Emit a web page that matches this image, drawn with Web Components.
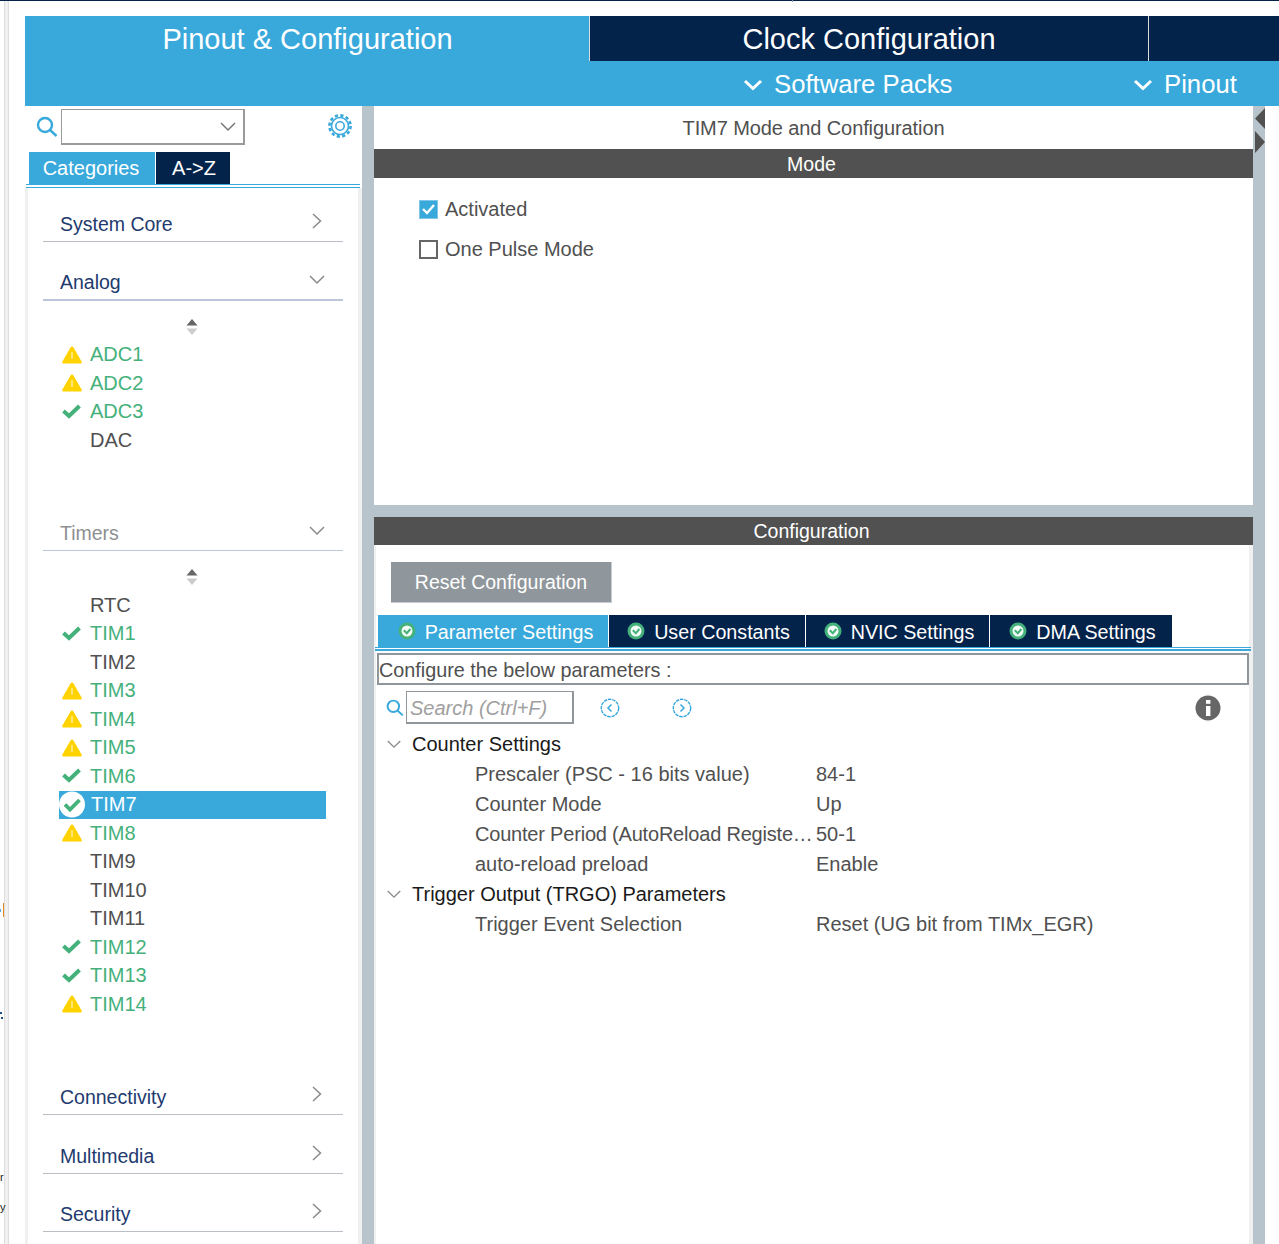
<!DOCTYPE html>
<html lang="en">
<head>
<meta charset="utf-8">
<title>TIM7 Mode and Configuration</title>
<style>
  html, body { margin: 0; height: 1244px; overflow: hidden; background: #fff; }
  body { font-family: "Liberation Sans", Arial, sans-serif; }
</style>
</head>
<body>
<cube-app></cube-app>
<script>
const ICONS = {
  ok: '<svg width="20" height="16" viewBox="0 0 20 16"><path d="M1.500 7l5.500 5L17.500 2" fill="none" stroke="#45b17a" stroke-width="4"/></svg>',
  warn: '<svg width="20" height="18" viewBox="0 0 20 18"><path d="M10 0.5c.7 0 1.200.4 1.500 1L19.600 15.600c.6 1.100 0 1.900-1.100 1.900H1.500c-1.100 0-1.700-.8-1.100-1.900L8.500 1.500c.3-.6.8-1 1.500-1z" fill="#ffd200"/><path d="M10 6v7" stroke="#fff3b0" stroke-width="1.300"/></svg>',
  selected: '<svg width="26" height="27" viewBox="0 0 26 27"><circle cx="13" cy="13.500" r="13" fill="#fff"/><path d="M6 13.500l5 5 9.500-9.500" fill="none" stroke="#45b17a" stroke-width="3.800"/></svg>',
  tabOk: '<svg width="18" height="18" viewBox="0 0 18 18"><circle cx="9" cy="9" r="8.500" fill="#45b17a"/><circle cx="9" cy="9" r="5.500" fill="#f2fbf6"/><path d="M5.800 8.200l3 3 3.600-4.200" fill="none" stroke="#45b17a" stroke-width="2"/></svg>',
  right: '<svg width="12" height="18" viewBox="0 0 12 18"><path d="M2 2l7.500 7L2 16" fill="none" stroke="#8a8a8a" stroke-width="1.500"/></svg>',
  down: '<svg width="18" height="12" viewBox="0 0 18 12"><path d="M2 2l7 7 7-7" fill="none" stroke="#8a8a8a" stroke-width="1.500"/></svg>',
  search: '<svg width="22" height="22" viewBox="0 0 22 22"><circle cx="9" cy="9" r="7" fill="none" stroke="#39a9dc" stroke-width="2.400"/><path d="M14 14l6.500 6" stroke="#39a9dc" stroke-width="2.400"/></svg>',
  gear: '<svg width="24" height="26" viewBox="0 0 24 26"><circle cx="12" cy="13" r="4.200" fill="none" stroke="#39a9dc" stroke-width="1.600"/><circle cx="12" cy="13" r="8.500" fill="none" stroke="#39a9dc" stroke-width="1.600"/><circle cx="12" cy="13" r="10.600" fill="none" stroke="#39a9dc" stroke-width="2.600" stroke-dasharray="3.200 2.350"/></svg>',
  prev: '<svg width="20" height="20" viewBox="0 0 20 20"><circle cx="10" cy="10" r="8.700" fill="none" stroke="#39a9dc" stroke-width="1.400" stroke-dasharray="3.500 .8"/><path d="M11.500 6.500L8 10l3.500 3.500" fill="none" stroke="#39a9dc" stroke-width="1.500"/></svg>',
  next: '<svg width="20" height="20" viewBox="0 0 20 20"><circle cx="10" cy="10" r="8.700" fill="none" stroke="#39a9dc" stroke-width="1.400" stroke-dasharray="3.500 .8"/><path d="M8.500 6.500L12 10l-3.500 3.500" fill="none" stroke="#39a9dc" stroke-width="1.500"/></svg>',
  info: '<svg width="26" height="26" viewBox="0 0 26 26"><circle cx="13" cy="13" r="12.500" fill="#666"/><rect x="11" y="11" width="4.400" height="10" fill="#fff"/><rect x="11" y="5" width="4.400" height="3.800" fill="#fff"/></svg>',
  sort: '<svg width="12" height="16" viewBox="0 0 12 16"><path d="M6 0l5.500 6.500H.5z" fill="#666"/><path d="M6 16L.5 9.500h11z" fill="#ccc"/></svg>',
  packDown: '<svg width="20" height="12" viewBox="0 0 20 12"><path d="M2 2l8 7.500L18 2" fill="none" stroke="#fff" stroke-width="3"/></svg>'
}

/**
 * Creates a component from its markup, with an open shadow root.
 *
 * @param {string} name - The element name.
 * @param {string} html - Styles and markup for the shadow root.
 * @param {Function} [render] - Called with the element when connected.
 */
function component (name, html, render) {
  const template = document.createElement('template')
  template.innerHTML = html
  customElements.define(name, class extends HTMLElement {
    constructor () {
      super()
      this.attachShadow({ mode: 'open' })
        .appendChild(template.content.cloneNode(true))
    }

    connectedCallback () {
      if (render) render(this, this.shadowRoot)
    }
  })
}

component('cube-header', `
  <style>
    :host { display: grid; grid-template-columns: 564px 560px 1fr; grid-template-rows: 45px 45px; background: #39a9dc; color: #fff; font-size: 29px; }
    .tab { display: flex; align-items: center; justify-content: center; box-sizing: border-box; padding-top: 2px; }
    .one { padding-left: 1px; }
    .two { background: #03234b; border-left: 1px solid #d8dde2; border-right: 1px solid #d8dde2; }
    .three { background: #03234b; }
    .menu { grid-column: 1 / 4; display: grid; grid-template-columns: 719px 390px 1fr; font-size: 25.700px; }
    .item { grid-column: 2; display: flex; align-items: center; gap: 11px; margin-left: -1px; padding-top: 2px; }
    .item + .item { grid-column: 3; }
    svg { flex: none; }
  </style>
  <div class="tab one">Pinout &amp; Configuration</div>
  <div class="tab two">Clock Configuration</div>
  <div class="tab three"></div>
  <div class="menu">
    <div class="item">${ICONS.packDown}<span>Software Packs</span></div>
    <div class="item">${ICONS.packDown}<span>Pinout</span></div>
  </div>
`)

component('side-search', `
  <style>
    :host { display: flex; align-items: flex-start; height: 46px; padding: 3px 0 0 11px; box-sizing: border-box; }
    .combo { box-sizing: border-box; width: 184px; height: 36px; margin-left: 3px; border: 2px solid #9a9a9a; border-top-width: 1px; border-left-width: 1px; display: flex; align-items: center; justify-content: flex-end; padding-right: 6px; }
    .gear { margin: 4px 0 0 83px; display: flex; }
    .lens { display: flex; margin-top: 7px; }
  </style>
  <span class="lens">${ICONS.search}</span>
  <div class="combo">${ICONS.down.replace('#8a8a8a', '#777')}</div>
  <span class="gear">${ICONS.gear}</span>
`)

component('side-tabs', `
  <style>
    :host { display: block; height: 36px; box-sizing: border-box; }
    .tabs { display: flex; height: 32px; padding-left: 4px; gap: 1px; color: #fff; font-size: 20px; }
    .tabs div { display: flex; align-items: center; justify-content: center; height: 32px; box-sizing: border-box; }
    .cat { width: 126px; background: #39a9dc; padding-right: 2px; }
    .az { width: 74px; background: #03234b; padding-left: 2px; }
    .rule { margin-left: 1px; width: 334px; height: 4px; box-sizing: border-box; border-top: 1px solid #39a9dc; border-bottom: 1px solid #39a9dc; }
  </style>
  <div class="tabs"><div class="cat">Categories</div><div class="az">A-&gt;Z</div></div>
  <div class="rule"></div>
`)

component('cube-category', `
  <style>
    :host { display: block; width: 300px; margin-left: 15px; }
    .head { height: 58.500px; box-sizing: border-box; border-bottom: 1px solid #b8bec4; display: flex; align-items: flex-end; justify-content: space-between; padding: 0 17px 5px 17px; color: #233a6e; font-size: 19.500px; line-height: 24px; }
    :host([open]) .head { border-bottom: 2px solid #bcc6d8; }
    :host([muted]) .head { color: #8d8f92; border-bottom: 1px solid #bcc6d8; }
    .arrow { display: flex; height: 24px; align-items: flex-start; margin-right: 3px; }
    :host([open]) .arrow { margin-right: 0; padding-top: 4px; box-sizing: border-box; }
    :host([first]) .head { height: 54px; }
    .body { display: none; }
    :host([open]) .body { display: block; padding: 18px 0 38px 0; }
    .sort { display: flex; justify-content: center; height: 22px; width: 298px; }
  </style>
  <div class="head"><span class="label"></span><span class="arrow"></span></div>
  <div class="body"><div class="sort">${ICONS.sort}</div><slot></slot></div>
`, (el, root) => {
  root.querySelector('.label').textContent = el.getAttribute('label')
  root.querySelector('.arrow').innerHTML = el.hasAttribute('open') ? ICONS.down : ICONS.right
})

component('cube-item', `
  <style>
    :host { display: flex; align-items: center; width: 267px; height: 28.500px; margin-left: 16px; font-size: 20px; color: #505050; box-sizing: border-box; }
    :host([status]) { color: #45b17a; }
    :host([selected]) { background: #39a9dc; color: #fff; }
    .icon { display: flex; width: 31px; flex: none; padding-left: 3px; box-sizing: border-box; }
    :host([selected]) .icon { padding-left: 0; width: 32px; }
  </style>
  <span class="icon"></span><slot></slot>
`, (el, root) => {
  const status = el.hasAttribute('selected') ? 'selected' : el.getAttribute('status')
  if (status) root.querySelector('.icon').innerHTML = ICONS[status]
})

component('cube-sidebar', `
  <style>
    :host { display: flex; flex-direction: column; width: 337px; height: 100%; box-sizing: border-box; background: #fff; overflow: hidden; }
    .list { flex: 1; border-left: 3px solid #f0f0f0; border-right: 4px solid #f0f0f0; }
  </style>
  <side-search></side-search>
  <side-tabs></side-tabs>
  <div class="list"><slot></slot></div>
`)

component('dark-bar', `
  <style>
    :host { display: flex; align-items: center; justify-content: center; height: 28px; box-sizing: border-box; padding: 2px 4px 0 0; background: #505150; color: #fff; font-size: 19.500px; }
  </style>
  <slot></slot>
`)

component('cube-check', `
  <style>
    :host { display: flex; align-items: center; gap: 7px; height: 20px; color: #505050; font-size: 20px; }
    .box { box-sizing: border-box; width: 19px; height: 19px; border: 2px solid #666; display: flex; background: #fff; }
    :host([checked]) .box { background: #39a9dc; border: 1px solid #7fc6e8; }
  </style>
  <span class="box"></span><slot></slot>
`, (el, root) => {
  if (el.hasAttribute('checked')) {
    root.querySelector('.box').innerHTML = '<svg width="17" height="17" viewBox="0 0 17 17"><path d="M3 8l4 4 7-8" fill="none" stroke="#fff" stroke-width="2.400"/></svg>'
  }
})

component('mode-panel', `
  <style>
    :host { display: block; height: 399px; background: #fff; }
    .title { height: 43px; display: flex; align-items: center; justify-content: center; color: #505050; font-size: 20px; letter-spacing: -.1px; padding: 2px 0 0 0; box-sizing: border-box; }
    dark-bar { height: 29px; }
    .checks { display: flex; flex-direction: column; gap: 20px; padding: 21px 0 0 45px; }
  </style>
  <div class="title">TIM7 Mode and Configuration</div>
  <dark-bar>Mode</dark-bar>
  <div class="checks">
    <cube-check checked>Activated</cube-check>
    <cube-check>One Pulse Mode</cube-check>
  </div>
`)

component('config-tabs', `
  <style>
    :host { display: block; margin-top: 12px; }
    .tabs { display: flex; gap: 1px; height: 32px; padding-left: 2px; color: #fff; font-size: 19.700px; }
    .tab { display: flex; align-items: center; justify-content: center; gap: 9px; background: #03234b; box-sizing: border-box; padding-left: 3px; }
    .tab span { margin-top: 2px; }
    .tab:nth-child(1) { width: 230px; background: #39a9dc; padding-left: 5px; }
    .tab:nth-child(2) { width: 196px; }
    .tab:nth-child(3) { width: 183px; }
    .tab:nth-child(4) { width: 182px; }
    .rule { margin-left: -1px; width: 876px; height: 4px; box-sizing: border-box; border-top: 1px solid #39a9dc; border-bottom: 2px solid #39a9dc; }
  </style>
  <div class="tabs">
    <div class="tab">${ICONS.tabOk}<span>Parameter Settings</span></div>
    <div class="tab">${ICONS.tabOk}<span>User Constants</span></div>
    <div class="tab">${ICONS.tabOk}<span>NVIC Settings</span></div>
    <div class="tab">${ICONS.tabOk}<span>DMA Settings</span></div>
  </div>
  <div class="rule"></div>
`)

component('param-search', `
  <style>
    :host { display: flex; align-items: center; height: 33px; margin-top: 6px; padding-left: 10px; }
    .lens { display: flex; width: 20px; }
    .input { box-sizing: border-box; width: 168px; height: 33px; border: 2px solid #90979c; border-top-width: 1px; border-left-width: 1px; color: #a0a0a0; font-style: italic; font-size: 20px; padding-left: 3px; line-height: 33px; }
    .prev { margin-left: 26px; display: flex; }
    .next { margin-left: 52px; display: flex; }
    .info { margin-left: auto; margin-right: 28px; display: flex; }
  </style>
  <span class="lens">${ICONS.search.replace('width="22" height="22"', 'width="18" height="18"')}</span>
  <div class="input">Search (Ctrl+F)</div>
  <span class="prev">${ICONS.prev}</span>
  <span class="next">${ICONS.next}</span>
  <span class="info">${ICONS.info}</span>
`)

component('param-group', `
  <style>
    :host { display: flex; align-items: center; height: 30px; color: #1a1a1a; font-size: 20px; padding-left: 10px; }
    .arrow { display: flex; width: 26px; }
  </style>
  <span class="arrow">${ICONS.down.replace('width="18" height="12"', 'width="16" height="11"')}</span><slot></slot>
`)

component('param-row', `
  <style>
    :host { display: grid; grid-template-columns: 341px 1fr; align-items: center; height: 30px; color: #505050; font-size: 20px; padding-left: 99px; }
    .name { white-space: nowrap; overflow: hidden; }
  </style>
  <span class="name"><slot name="name"></slot></span><span><slot name="value"></slot></span>
`)

component('config-panel', `
  <style>
    :host { display: block; flex: 1; background: #fff; border-left: 2px solid #f0f0f0; border-right: 4px solid #f0f0f0; box-sizing: border-box; min-height: 0; }
    .bar { margin: 0 -4px 0 -2px; }
    dark-bar { padding-top: 0; }
    button { display: flex; align-items: center; justify-content: center; width: 221px; height: 41px; margin: 17px 0 0 15px; padding: 0; background: #90979c; border: 0; border-right: 1px solid #c8ccd0; border-bottom: 1px solid #c8ccd0; color: #fff; font: inherit; font-size: 19.500px; }
    .hint { box-sizing: border-box; width: 872px; height: 32px; margin: 2px 0 0 1px; border: 2px solid #90979c; color: #505050; font-size: 19.800px; line-height: 30px; white-space: pre; }
    .tree { padding-top: 5px; }
  </style>
  <div class="bar"><dark-bar>Configuration</dark-bar></div>
  <button>Reset Configuration</button>
  <config-tabs></config-tabs>
  <div class="hint">Configure the below parameters :</div>
  <param-search></param-search>
  <div class="tree"><slot></slot></div>
`)

component('cube-app', `
  <style>
    :host { display: block; height: 1244px; position: relative; overflow: hidden; }
    .line { height: 1px; background: #03234b; }
    .tick { position: absolute; left: 792px; top: 0; width: 1px; height: 2px; background: #8d97a3; }
    .page { display: grid; grid-template-columns: 25px 1fr; padding-top: 15px; height: 1243px; box-sizing: border-box; }
    .edge { display: flex; }
    .edge i { display: block; width: 5px; margin-left: 4px; height: 100%; box-sizing: border-box; background: #f0f0f0; border-left: 1px solid #ddd; border-right: 1px solid #ddd; }
    .window { display: flex; flex-direction: column; min-width: 0; }
    .work { flex: 1; display: flex; min-height: 0; }
    .split { width: 12px; flex: none; background: #b8c4cb; }
    .main { width: 879px; flex: none; display: flex; flex-direction: column; background: #b8c4cb; }
    .hand { width: 12px; flex: none; background: #b8c4cb; display: flex; flex-direction: column; gap: 2px; padding-top: 2px; box-sizing: border-box; }
    .gap { height: 12px; flex: none; }
    .hand svg { display: block; }
    .stray { position: absolute; left: 0; font-size: 11px; color: #222; line-height: 14px; }
    .mark { position: absolute; }
  </style>
  <div class="line"></div>
  <i class="tick"></i>
  <div class="page">
    <div class="edge" style="margin-top:-15px"><i></i></div>
    <div class="window">
      <cube-header></cube-header>
      <div class="work">
        <cube-sidebar>
          <cube-category first label="System Core"></cube-category>
          <cube-category open label="Analog">
            <cube-item status="warn">ADC1</cube-item>
            <cube-item status="warn">ADC2</cube-item>
            <cube-item status="ok">ADC3</cube-item>
            <cube-item>DAC</cube-item>
          </cube-category>
          <cube-category open muted label="Timers">
            <cube-item>RTC</cube-item>
            <cube-item status="ok">TIM1</cube-item>
            <cube-item>TIM2</cube-item>
            <cube-item status="warn">TIM3</cube-item>
            <cube-item status="warn">TIM4</cube-item>
            <cube-item status="warn">TIM5</cube-item>
            <cube-item status="ok">TIM6</cube-item>
            <cube-item selected>TIM7</cube-item>
            <cube-item status="warn">TIM8</cube-item>
            <cube-item>TIM9</cube-item>
            <cube-item>TIM10</cube-item>
            <cube-item>TIM11</cube-item>
            <cube-item status="ok">TIM12</cube-item>
            <cube-item status="ok">TIM13</cube-item>
            <cube-item status="warn">TIM14</cube-item>
          </cube-category>
          <cube-category label="Connectivity"></cube-category>
          <cube-category label="Multimedia"></cube-category>
          <cube-category label="Security"></cube-category>
        </cube-sidebar>
        <div class="split"></div>
        <div class="main">
          <mode-panel></mode-panel>
          <div class="gap"></div>
          <config-panel>
            <param-group>Counter Settings</param-group>
            <param-row><span slot="name">Prescaler (PSC - 16 bits value)</span><span slot="value">84-1</span></param-row>
            <param-row><span slot="name">Counter Mode</span><span slot="value">Up</span></param-row>
            <param-row><span slot="name" style="letter-spacing:-.2px">Counter Period (AutoReload Registe…</span><span slot="value">50-1</span></param-row>
            <param-row><span slot="name">auto-reload preload</span><span slot="value">Enable</span></param-row>
            <param-group>Trigger Output (TRGO) Parameters</param-group>
            <param-row><span slot="name">Trigger Event Selection</span><span slot="value">Reset (UG bit from TIMx_EGR)</span></param-row>
          </config-panel>
        </div>
        <div class="hand">
          <svg width="12" height="21" viewBox="0 0 12 21"><path d="M12 0v21L2 10.500z" fill="#505150"/></svg>
          <svg width="12" height="22" viewBox="0 0 12 22"><path d="M2 0v22l10-11z" fill="#505150"/></svg>
        </div>
      </div>
    </div>
  </div>
  <i class="mark" style="left:3px;top:903px;width:1px;height:14px;background:#e08a20"></i>
  <i class="mark" style="left:0;top:909px;width:1px;height:3px;background:#5aa8e0"></i>
  <i class="mark" style="left:0;top:1012px;width:2px;height:2px;background:#1c4f8a"></i>
  <i class="mark" style="left:1px;top:1017px;width:2px;height:2px;background:#1c4f8a"></i>
  <span class="stray" style="top:1170px">r</span>
  <span class="stray" style="top:1200px">y</span>
`)
</script>
</body>
</html>
